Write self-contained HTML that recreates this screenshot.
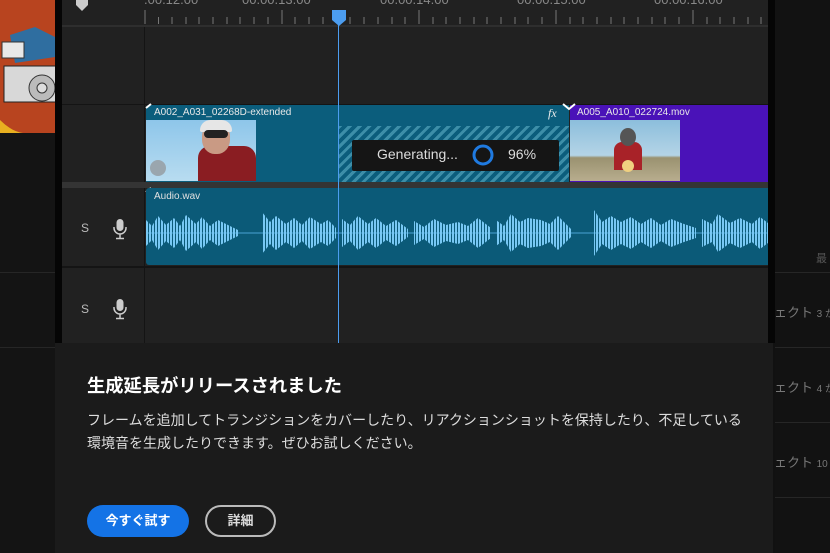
<!DOCTYPE html>
<html><head><meta charset="utf-8"><style>
*{margin:0;padding:0;box-sizing:border-box}
body{width:830px;height:553px;overflow:hidden;background:#111;font-family:"Liberation Sans","Noto Sans CJK JP",sans-serif;position:relative}
.a{position:absolute}
.hl{position:absolute;height:1px;background:#262626}
</style></head><body>
<div class="a" style="left:0;top:0;width:55px;height:553px;background:#141414"></div>
<div class="a" style="left:0;top:0;width:55px;height:133px;background:#b8441f;overflow:hidden">
 <svg width="55" height="133"><rect x="4" y="66" width="55" height="36" fill="#d8d8d8" stroke="#222"/><circle cx="42" cy="88" r="13" fill="#bbb" stroke="#333"/><circle cx="42" cy="88" r="5" fill="#ddd" stroke="#333"/><path d="M10 35 l25 -8 l20 10 l0 20 l-40 6z" fill="#2f6ea0"/><rect x="2" y="42" width="22" height="16" fill="#e8e8e8" stroke="#333"/><path d="M0 120 q15 15 30 13 L0 133z" fill="#e8b020"/></svg>
</div>
<div class="hl" style="left:0;top:272px;width:55px"></div>
<div class="hl" style="left:0;top:347px;width:55px"></div>
<div class="a" style="left:55px;top:0;width:7px;height:343px;background:#050505"></div>
<div class="a" style="left:768px;top:0;width:7px;height:343px;background:#050505"></div>
<div class="a" style="left:775px;top:0;width:55px;height:553px;background:#121212"></div>
<div class="hl" style="left:775px;top:272px;width:55px"></div>
<div class="hl" style="left:775px;top:347px;width:55px"></div>
<div class="hl" style="left:775px;top:422px;width:55px"></div>
<div class="hl" style="left:775px;top:497px;width:55px"></div>
<div class="a" style="left:816px;top:250px;color:#555;font-size:11px">最</div>
<div class="a" style="left:774px;top:302px;color:#777;font-size:13px;white-space:nowrap">ェクト <span style="font-size:10px">3 か</span></div>
<div class="a" style="left:774px;top:377px;color:#777;font-size:13px;white-space:nowrap">ェクト <span style="font-size:10px">4 か</span></div>
<div class="a" style="left:774px;top:452px;color:#777;font-size:13px;white-space:nowrap">ェクト <span style="font-size:10px">10</span></div>
<div class="a" style="left:62px;top:0;width:706px;height:343px;background:#212121"></div>
<div class="a" style="left:62px;top:25px;width:706px;height:2px;background:#2e2e2e"></div>
<div class="a" style="left:144px;top:27px;width:1px;height:316px;background:#141414"></div>
<div class="a" style="left:62px;top:104px;width:706px;height:1px;background:#141414"></div>
<div class="a" style="left:62px;top:182px;width:706px;height:6px;background:#343434"></div>
<div class="a" style="left:62px;top:266px;width:706px;height:2px;background:#141414"></div>
<svg class="a" style="left:62px;top:0" width="706" height="26">
 <path d="M14 0h12v5l-6 6-6-6z" fill="#ccc"/>
 <g fill="#888" font-size="13" font-family="Liberation Sans"><text x="82" y="4">.00.12.00</text><text x="180" y="4">00.00.13.00</text><text x="318" y="4">00.00.14.00</text><text x="455" y="4">00.00.15.00</text><text x="592" y="4">00.00.16.00</text></g>
 <g stroke="#777" stroke-width="1">
 <path d="M83 10v14M220 10v14M357 10v14M494 10v14M631 10v14"/>
 <path d="M96.5 17v7M110 17v7M124 17v7M137 17v7M151 17v7M165 17v7M178 17v7M192 17v7M206 17v7M233 17v7M247 17v7M261 17v7M288 17v7M302 17v7M316 17v7M330 17v7M343 17v7M371 17v7M384 17v7M398 17v7M412 17v7M425 17v7M439 17v7M453 17v7M466 17v7M480 17v7M508 17v7M521 17v7M535 17v7M549 17v7M562 17v7M576 17v7M590 17v7M603 17v7M617 17v7M645 17v7M658 17v7M672 17v7M686 17v7M699 17v7"/></g>
</svg>
<div class="a" style="left:146px;top:105px;width:423px;height:77px;background:#0b5d7c;border-radius:3px 0 0 0"></div>
<div class="a" style="left:154px;top:107px;color:#e8e8e8;font-size:10px">A002_A031_02268D-extended</div>
<div class="a" style="left:548px;top:106px;color:#eee;font-size:12px;font-style:italic;font-family:'Liberation Serif',serif">fx</div>
<div class="a" style="left:146px;top:120px;width:110px;height:61px;background:linear-gradient(180deg,#8ec6ea,#b8dcf0);overflow:hidden">
 <div class="a" style="left:52px;top:26px;width:58px;height:40px;background:#8a1d22;border-radius:12px 12px 0 0"></div>
 <div class="a" style="left:56px;top:2px;width:28px;height:32px;background:#c99a84;border-radius:45%"></div>
 <div class="a" style="left:54px;top:0;width:32px;height:12px;background:#e6e6e6;border-radius:12px 12px 2px 2px"></div>
 <div class="a" style="left:58px;top:10px;width:24px;height:8px;background:#222;border-radius:4px"></div>
 <div class="a" style="left:4px;top:40px;width:16px;height:16px;background:#9aa6ae;border-radius:50%"></div>
</div>
<div class="a" style="left:338px;top:126px;width:231px;height:56px;background:repeating-linear-gradient(135deg,#3d8ea8 0 3px,#0b5d7c 3px 7px)"></div>
<div class="a" style="left:352px;top:140px;width:207px;height:31px;background:#151515;border-radius:2px"></div>
<div class="a" style="left:377px;top:146px;color:#ddd;font-size:14px">Generating...</div>
<svg class="a" style="left:471px;top:143px" width="24" height="24"><circle cx="12" cy="12" r="9" fill="none" stroke="#1f7ae0" stroke-width="3"/></svg>
<div class="a" style="left:508px;top:146px;color:#ddd;font-size:14px">96%</div>
<div class="a" style="left:570px;top:105px;width:198px;height:77px;background:#4a12b8"></div>
<div class="a" style="left:577px;top:107px;color:#e8e8e8;font-size:10px">A005_A010_022724.mov</div>
<div class="a" style="left:570px;top:120px;width:110px;height:61px;background:linear-gradient(180deg,#8cbedc 0,#b4d4e6 58%,#9a9270 62%,#b8ad8e 100%);overflow:hidden">
 <div class="a" style="left:44px;top:22px;width:28px;height:28px;background:#a82228;border-radius:8px 8px 0 0"></div>
 <div class="a" style="left:50px;top:8px;width:16px;height:18px;background:#555;border-radius:50%"></div>
 <div class="a" style="left:52px;top:40px;width:12px;height:12px;background:#f0d080;border-radius:50%"></div>
</div>
<svg class="a" style="left:143px;top:102px" width="440" height="92"><path d="M3 6 l5-4" stroke="#fff" stroke-width="2"/><path d="M420 2 l6 5 l6-5" stroke="#fff" stroke-width="2" fill="none"/><path d="M3 90 l5-4" stroke="#fff" stroke-width="2"/></svg>
<div class="a" style="left:146px;top:188px;width:622px;height:77px;background:#0b5a78;border-radius:3px 0 0 3px"></div>
<div class="a" style="left:154px;top:191px;color:#e0e0e0;font-size:10px">Audio.wav</div>
<svg class="a" style="left:146px;top:210px" width="622" height="46">
 <defs><pattern id="st" width="3" height="46" patternUnits="userSpaceOnUse"><rect width="2" height="46" fill="#78c8f4"/></pattern></defs>
 <line x1="0" y1="23" x2="622" y2="23" stroke="#4aa3d4" stroke-width="1"/>
 <g fill="url(#st)">
 <path d="M0 10 L6 16 L12 6 L20 15 L28 8 L34 16 L40 5 L50 14 L56 7 L64 16 L72 10 L80 14 L92 20 L92 26 L80 32 L72 36 L64 30 L56 39 L50 32 L40 41 L34 30 L28 38 L20 31 L12 40 L6 30 L0 36z"/>
 <path d="M116 2 L124 12 L130 6 L140 14 L148 8 L156 15 L164 7 L175 14 L182 10 L190 18 L190 28 L182 36 L175 32 L164 39 L156 31 L148 38 L140 32 L130 40 L124 34 L116 44z"/>
 <path d="M196 9 L204 15 L212 6 L222 14 L230 8 L240 16 L250 10 L262 19 L262 27 L250 36 L240 30 L230 38 L222 32 L212 40 L204 31 L196 37z"/>
 <path d="M268 11 L278 17 L288 9 L300 15 L312 12 L322 16 L332 8 L345 18 L345 28 L332 38 L322 30 L312 34 L300 31 L288 37 L278 29 L268 35z"/>
 <path d="M350 10 L358 16 L365 4 L374 12 L382 8 L395 10 L404 14 L412 6 L425 19 L425 27 L412 40 L404 32 L395 36 L382 38 L374 34 L365 42 L358 30 L350 36z"/>
 <path d="M448 0 L456 12 L465 6 L475 12 L485 7 L495 14 L505 8 L515 15 L525 9 L538 14 L550 18 L550 28 L538 32 L525 37 L515 31 L505 38 L495 32 L485 39 L475 34 L465 40 L456 34 L448 46z"/>
 <path d="M556 9 L566 14 L572 4 L584 13 L594 8 L606 14 L614 7 L622 13 L622 33 L614 39 L606 32 L594 38 L584 33 L572 42 L566 32 L556 37z"/>
 </g>
</svg>
<div class="a" style="left:81px;top:221px;color:#bbb;font-size:12px">S</div>
<div class="a" style="left:81px;top:302px;color:#bbb;font-size:12px">S</div>
<svg class="a" style="left:112px;top:218px" width="16" height="22"><rect x="4.5" y="1" width="7" height="12" rx="3.5" fill="#ccc"/><path d="M2 9v1a6 6 0 0012 0V9M8 16v4M4 20.5h8" stroke="#ccc" stroke-width="1.5" fill="none"/></svg>
<svg class="a" style="left:112px;top:298px" width="16" height="22"><rect x="4.5" y="1" width="7" height="12" rx="3.5" fill="#ccc"/><path d="M2 9v1a6 6 0 0012 0V9M8 16v4M4 20.5h8" stroke="#ccc" stroke-width="1.5" fill="none"/></svg>
<div class="a" style="left:337.5px;top:10px;width:1.5px;height:333px;background:#4c9df0"></div>
<svg class="a" style="left:331px;top:9px" width="16" height="18"><path d="M1 1h14v10l-7 6-7-6z" fill="#4c9df0"/></svg>
<div class="a" style="left:55px;top:343px;width:718px;height:210px;background:#1b1b1b">
 <div class="a" style="left:32px;top:29px;color:#fff;font-size:18.3px;font-weight:bold;white-space:nowrap">生成延長がリリースされました</div>
 <div class="a" style="left:32px;top:66px;width:690px;color:#ddd;font-size:14px;line-height:23px;white-space:nowrap">フレームを追加してトランジションをカバーしたり、リアクションショットを保持したり、不足している<br>環境音を生成したりできます。ぜひお試しください。</div>
 <div class="a" style="left:32px;top:162px;width:102px;height:32px;background:#1473e6;border-radius:16px;color:#fff;font-size:13px;font-weight:bold;text-align:center;line-height:32px">今すぐ試す</div>
 <div class="a" style="left:150px;top:162px;width:71px;height:32px;border:2px solid #bbb;border-radius:16px;color:#ddd;font-size:13px;font-weight:bold;text-align:center;line-height:28px">詳細</div>
</div>
</body></html>
